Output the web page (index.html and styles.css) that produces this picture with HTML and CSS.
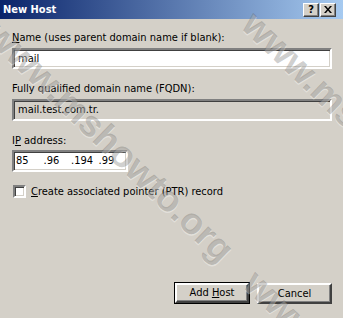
FILE: index.html
```html
<!DOCTYPE html>
<html>
<head>
<meta charset="utf-8">
<link rel="stylesheet" href="styles.css">
</head>
<body>
<div class="dialog">
  <div class="titlebar">
    <span class="title">New Host</span>
    <div class="tbtns">
      <span class="tbtn help">?</span>
      <span class="tbtn close"><svg width="8" height="7" viewBox="0 0 8 7"><path d="M0 0h2l2 2.5L6 0h2L5 3.5 8 7H6L4 4.5 2 7H0l3-3.5z" fill="#000"/></svg></span>
    </div>
  </div>
  <div class="body">
    <label class="lbl first"><u>N</u>ame (uses parent domain name if blank):</label>
    <div class="field">mail</div>
    <label class="lbl">Fully qualified domain name (FQDN):</label>
    <div class="field ro">mail.test.com.tr.</div>
    <label class="lbl">I<u>P</u> address:</label>
    <div class="field ip"><span class="seg">85</span><span class="seg">.96</span><span class="seg">.194</span><span class="seg">.99</span></div>
    <div class="check"><span class="box"></span><span><u>C</u>reate associated pointer (PTR) record</span></div>
    <div class="buttons">
      <span class="btn default">Add <u>H</u>ost</span>
      <span class="btn">Cancel</span>
    </div>
  </div>
  <div class="wm">
    <span class="wmt w1">www.mshowto.org&nbsp;&nbsp;&nbsp;www.mshowto.org</span>
    <span class="wmt w2">www.mshowto.org</span>
    <span class="wmt w3">www.mshowto.org</span>
  </div>
</div>
</body>
</html>
```
FILE: styles.css
```css
html, body { margin: 0; padding: 0; }
body { background: #d4d0c8; font-family: "DejaVu Sans Condensed", "Liberation Sans", sans-serif; font-size: 11px; color: #000; }
.dialog { position: relative; width: 343px; height: 318px; overflow: hidden; background: #d4d0c8; display: flex; flex-direction: column; }
.titlebar { height: 19px; background: linear-gradient(to right, #0a246a, #a6caf0); display: flex; align-items: center; justify-content: space-between; padding: 0 7px 0 3px; flex: none; }
.title { color: #fff; font-weight: bold; font-family: "DejaVu Sans Condensed", "Liberation Sans", sans-serif; font-size: 11px; }
.tbtns { display: flex; gap: 1px; }
.tbtn { width: 14px; height: 12px; background: #d4d0c8; border: 1px solid; border-color: #fff #404040 #404040 #fff; box-shadow: inset -1px -1px #808080; display: flex; align-items: center; justify-content: center; font-weight: bold; font-size: 11px; line-height: 12px; }
.body { flex: 1; display: flex; flex-direction: column; padding: 0 11px 14px 12px; }
.lbl { display: block; line-height: 13px; height: 13px; margin-top: 13px; white-space: nowrap; }
.lbl.first { margin-top: 12px; }
.field { margin-top: 4px; height: 17px; border: 2px solid; border-color: #808080 #fff #fff #808080; box-shadow: inset 1px 1px #404040, inset -1px -1px #d4d0c8; background: #fff; padding: 0 4px; line-height: 17px; }
.field.ro { background: #d4d0c8; height: 18px; line-height: 18px; }
.field.ip { width: 110px; height: 18px; line-height: 18px; padding: 0 0 0 2px; display: flex; margin-top: 3px; }
.seg { width: 28.5px; }
.check { margin-top: 13px; display: flex; align-items: center; gap: 5px; height: 13px; padding-left: 1px; }
.box { width: 9px; height: 9px; background: #fff; border: 2px solid; border-color: #808080 #fff #fff #808080; box-shadow: inset 1px 1px #404040, inset -1px -1px #d4d0c8; }
.buttons { margin-top: auto; display: flex; justify-content: flex-end; gap: 7px; }
.btn { width: 71px; height: 17px; line-height: 17px; text-align: center; background: #d4d0c8; border: 2px solid; border-color: #fff #404040 #404040 #fff; box-shadow: inset -1px -1px #808080; }
.btn.default { width: 70px; height: 16px; line-height: 16px; margin-right: 1px; box-shadow: inset -1px -1px #808080, 0 0 0 1px #000; }
.wm { position: absolute; inset: 0; pointer-events: none; }
.wmt { position: absolute; font-family: "Liberation Sans", sans-serif; font-weight: bold; font-size: 37px; line-height: 40px; color: rgba(90, 88, 85, 0.3); text-shadow: 1px 1px 0 rgba(255,255,255,0.35); white-space: nowrap; transform-origin: 0 0; transform: rotate(44deg); }
.w1 { left: 6px; top: 14px; }
.w2 { left: 262px; top: 4px; }
.w3 { left: -60px; top: 262px; }
```
